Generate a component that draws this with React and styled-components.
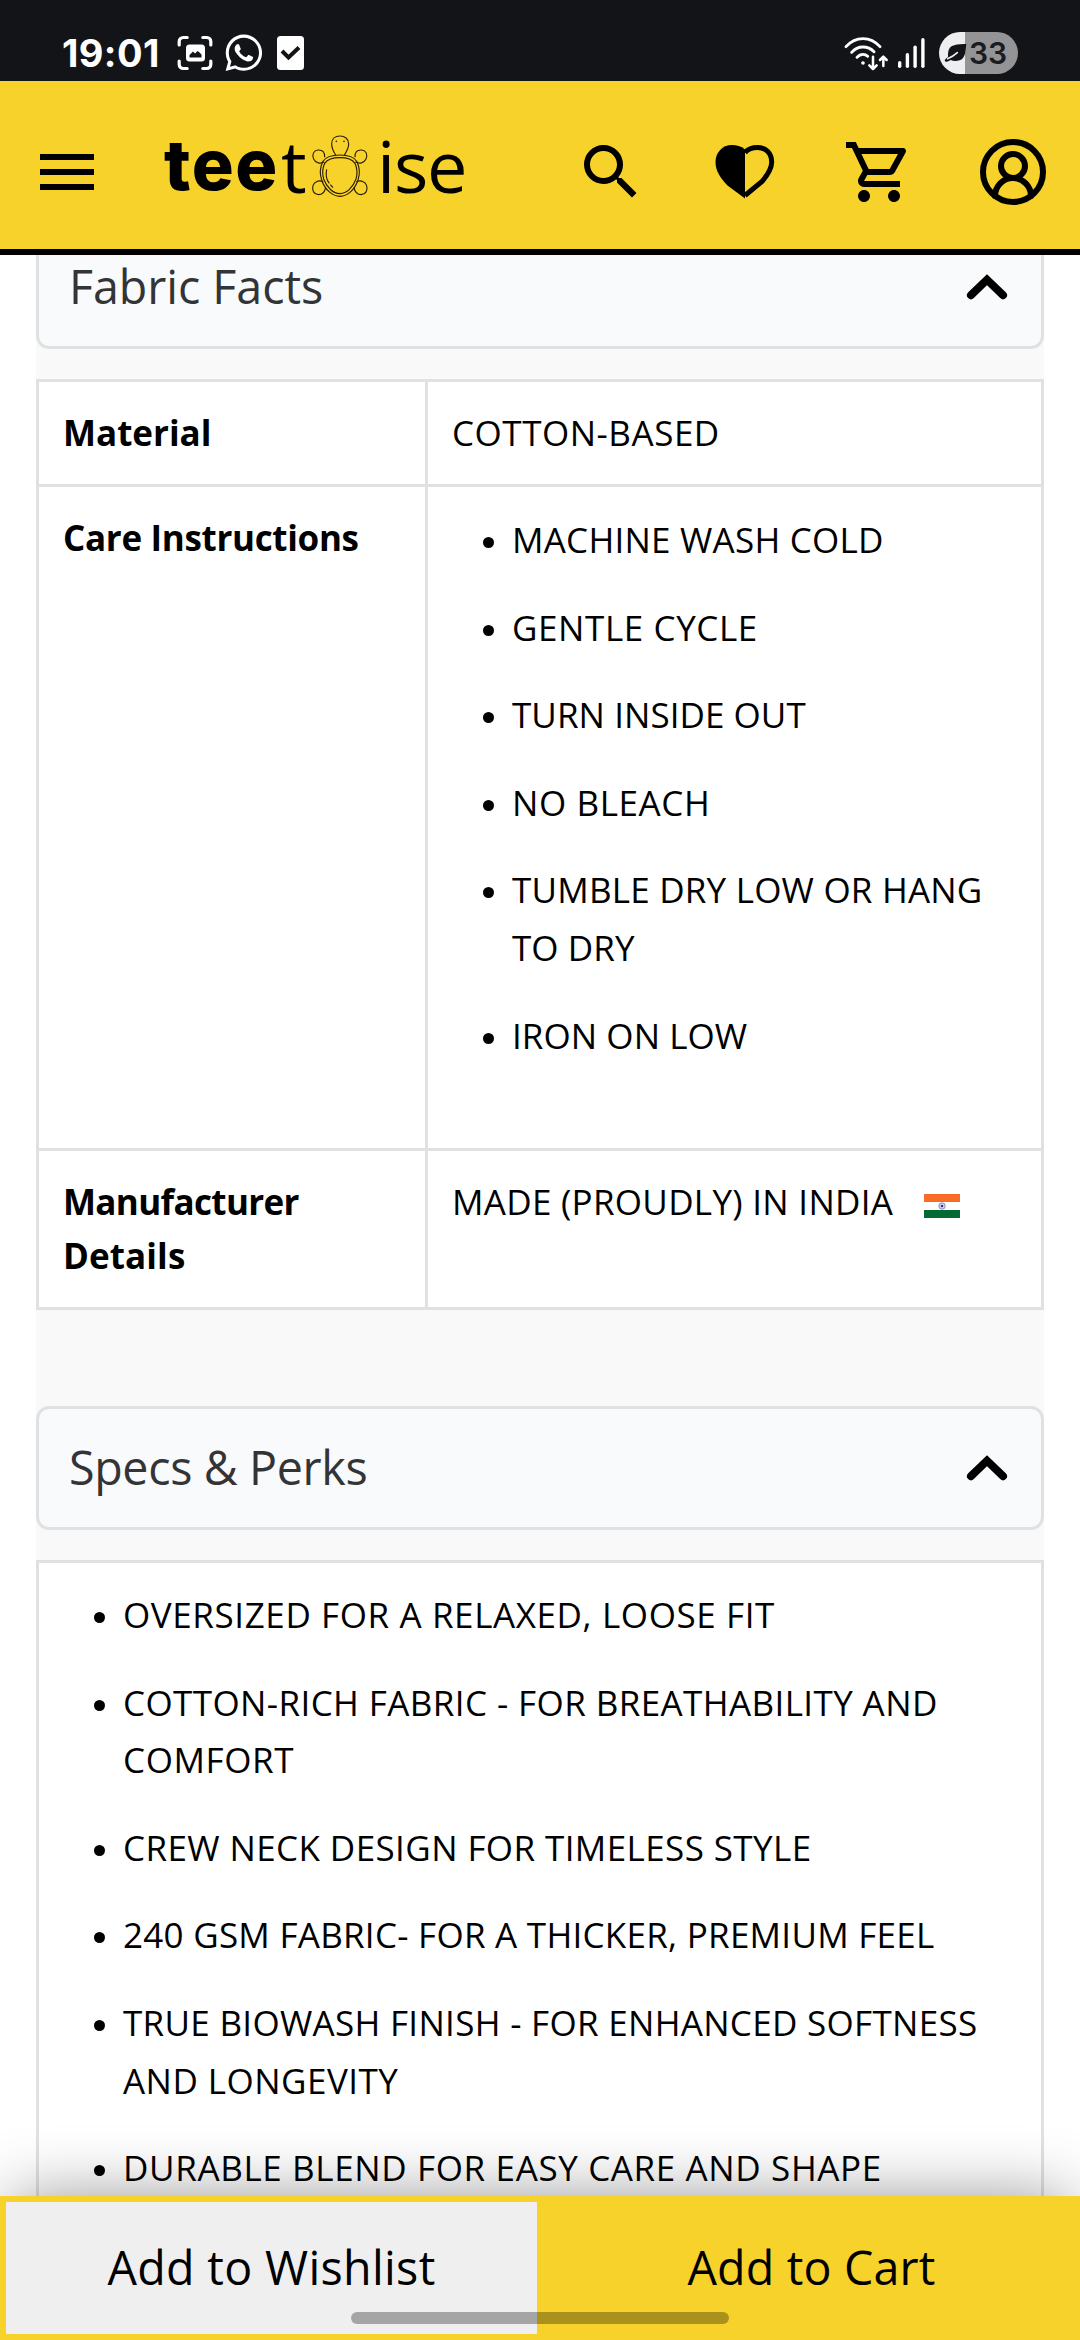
import React from "react";
import styled, { createGlobalStyle } from "styled-components";
import { MdMenu, MdSearch, MdOutlineShoppingCart } from "react-icons/md";
import { FaWhatsapp } from "react-icons/fa";
import { CircleUserRound } from "lucide-react";

const YELLOW = "#f7d22a";
const LINE = "#dfe1e3";

const GlobalStyle = createGlobalStyle`
  * { box-sizing: border-box; }
  body { margin: 0; background: #fff; }
`;

const Page = styled.div`
  display: flex;
  flex-direction: column;
  width: 1080px;
  height: 2340px;
  overflow: hidden;
  background: #fff;
  color: #000;
  font-family: "Open Sans", "Noto Sans", sans-serif;
`;

/* ---------- status bar ---------- */

const StatusBar = styled.div`
  flex: none;
  display: flex;
  justify-content: space-between;
  height: 81px;
  padding: 25px 62px 0 62px;
  background: #131418;
  color: #fff;
`;

const StatusGroup = styled.div`
  display: flex;
  align-items: center;
  height: 56px;
  svg { flex: none; display: block; }
`;

const Clock = styled.span`
  width: 115px;
  font: 700 38px/56px "Inter", sans-serif;
  letter-spacing: 0.4px;
`;

const WhatsappIcon = styled(FaWhatsapp)`
  margin: 0 12px 0 10px;
`;

const Signal = styled.svg`
  margin: 0 14px 0 9px;
`;

const Battery = styled.div`
  display: flex;
  align-items: center;
  gap: 2px;
  width: 79px;
  height: 42px;
  padding-left: 5px;
  border-radius: 21px;
  background: linear-gradient(to right, #eeeef0 26px, #949497 26px);
  color: #1b1c20;
  font: 600 30px/42px "Inter", sans-serif;
`;

/* ---------- header ---------- */

const Header = styled.header`
  flex: none;
  display: flex;
  align-items: center;
  height: 174px;
  padding: 14px 31px 0;
  border-bottom: 6px solid #000;
  background: ${YELLOW};
  svg { flex: none; display: block; }
`;

const Logo = styled.div`
  display: flex;
  align-items: center;
  height: 72px;
  margin-left: 61px;
  line-height: 72px;
  font-size: 72px;
`;

const LogoBold = styled.span`
  width: 117px;
  font-family: "Inter", sans-serif;
  font-weight: 800;
  font-size: 70px;
  letter-spacing: 1.6px;
  padding-bottom: 14px;
`;

const LogoThin = styled.span`
  width: ${(p) => p.$width}px;
  padding-bottom: 14px;
  letter-spacing: -1.2px;
`;

const Turtle = styled.svg`
  margin: -13px 7px 0 0;
`;

const HeaderActions = styled.div`
  display: flex;
  gap: 62px;
  margin-left: auto;
`;

/* ---------- content ---------- */

const Viewport = styled.main`
  flex: 1;
  min-height: 0;
  overflow: hidden;
  padding: 0 36px;
`;

const Details = styled.div`
  display: flex;
  flex-direction: column;
  width: 1008px;
  margin-top: -30px;
  background: #f9f9f9;
`;

const SectionHead = styled.div`
  display: flex;
  align-items: center;
  justify-content: space-between;
  height: 124px;
  margin-bottom: 30px;
  padding: 0 33px 0 30px;
  border: 3px solid ${LINE};
  border-radius: 13px;
  background: #f9fafc;
`;

const SectionTitle = styled.h2`
  margin: 0;
  padding-bottom: 2px;
  color: #333436;
  font-size: 46.6px;
  font-weight: 400;
  line-height: 54px;
  letter-spacing: ${(p) => p.$track}px;
`;

const FactsTable = styled.div`
  margin-bottom: 96px;
  border: 3px solid ${LINE};
  background: #fff;
`;

const FactRow = styled.div`
  box-sizing: content-box;
  display: grid;
  grid-template-columns: 386px 1fr;
  height: ${(p) => p.$height}px;
  border-bottom: 3px solid ${LINE};
  &:last-child { border-bottom: 0; }
`;

const FactName = styled.div`
  padding: 24px;
  font-size: 35px;
  font-weight: 700;
  line-height: 54px;
`;

const FactValue = styled.div`
  display: flex;
  align-items: flex-start;
  gap: 31px;
  padding: 24px;
  border-left: 3px solid ${LINE};
  font-size: 35px;
  line-height: 54px;
`;

const Line = styled.span`
  display: block;
  white-space: nowrap;
  letter-spacing: ${(p) => p.$track}px;
`;

const BulletList = styled.ul`
  display: flex;
  flex-direction: column;
  gap: 30px;
  margin: 0;
  padding: 0 0 0 ${(p) => p.$indent}px;
  list-style: none;
  font-size: 35px;
  line-height: 57.6px;
`;

const BulletItem = styled.li`
  display: flex;
  gap: 18px;
  &::before {
    content: "";
    flex: none;
    width: 11px;
    height: 11px;
    margin-top: 26px;
    border-radius: 50%;
    background: #000;
  }
`;

const PerksBox = styled.div`
  height: 900px;
  padding: 23px 0;
  border: 3px solid ${LINE};
  background: #fff;
`;

/* ---------- bottom bar ---------- */

const BuyBar = styled.footer`
  position: relative;
  flex: none;
  display: grid;
  grid-template-columns: 537px 1fr;
  height: 144px;
  background: ${YELLOW};
  box-shadow: 0 -10px 66px -12px rgba(0, 0, 0, 0.42);
`;

const BuyButton = styled.button`
  margin: 0;
  padding: 0 0 2px ${(p) => (p.$primary ? 6 : 0)}px;
  border: solid ${YELLOW};
  border-width: ${(p) => (p.$primary ? "6px 0" : "6px 0 6px 6px")};
  background: ${(p) => (p.$primary ? YELLOW : "#efefef")};
  color: #000;
  font-family: inherit;
  font-size: 46.6px;
  letter-spacing: ${(p) => p.$track}px;
`;

const HomeHandle = styled.div`
  position: absolute;
  left: 351px;
  bottom: 16px;
  width: 378px;
  height: 12px;
  border-radius: 6px;
  background: rgba(0, 0, 0, 0.31);
`;

const CARE = [
  [["MACHINE WASH COLD", 0.24]],
  [["GENTLE CYCLE", 0.6]],
  [["TURN INSIDE OUT", 0.06]],
  [["NO BLEACH", 0.6]],
  [["TUMBLE DRY LOW OR HANG", 0.21], ["TO DRY", 0.06]],
  [["IRON ON LOW", 0.06]],
];

const PERKS = [
  [["OVERSIZED FOR A RELAXED, LOOSE FIT", 0.6]],
  [["COTTON-RICH FABRIC - FOR BREATHABILITY AND", 0.4], ["COMFORT", 0.6]],
  [["CREW NECK DESIGN FOR TIMELESS STYLE", 0.4]],
  [["240 GSM FABRIC- FOR A THICKER, PREMIUM FEEL", 0.26]],
  [["TRUE BIOWASH FINISH - FOR ENHANCED SOFTNESS", 0.3], ["AND LONGEVITY", 0.47]],
  [["DURABLE BLEND FOR EASY CARE AND SHAPE", 0.63]],
];

function Bullets({ items, indent }) {
  return (
    <BulletList $indent={indent}>
      {items.map((lines) => (
        <BulletItem key={lines[0][0]}>
          <div>
            {lines.map(([text, track]) => (
              <Line key={text} $track={track}>{text}</Line>
            ))}
          </div>
        </BulletItem>
      ))}
    </BulletList>
  );
}

function CaptureIcon() {
  return (
    <svg width="36" height="36" viewBox="0 0 36 36" fill="none">
      <path d="M2.2 10V6.5a4 4 0 0 1 4-4h4M25.8 2.5h4a4 4 0 0 1 4 4V10M33.8 26v3.500a4 4 0 0 1-4 4h-4M10.200 33.500h-4a4 4 0 0 1-4-4V26" stroke="#fff" strokeWidth="3.200" strokeLinecap="round" />
      <rect x="9" y="9.500" width="19" height="17" rx="3.500" fill="#fff" />
      <path d="M12.500 22.500v-2.500l3.500-3.500 2 2 2.500-2.500 1.500 1 2.500 2.500v3z" fill="#131418" />
    </svg>
  );
}

function TaskIcon() {
  return (
    <svg width="27" height="34" viewBox="0 0 27 34" fill="none">
      <rect width="27" height="34" rx="3.500" fill="#fff" />
      <path d="M5 15l6.500 6.500L22 11.500" stroke="#131418" strokeWidth="4" />
    </svg>
  );
}

function WifiIcon() {
  return (
    <svg width="45" height="35" viewBox="40 44 135 105" fill="none" stroke="#fff" strokeWidth="8.500" strokeLinecap="round" strokeLinejoin="round">
      <path d="M46 76Q68 52 97 52t51 24M63 93q14-16 34-16 19 0 33 14M79 108q8-9 18-9 8 0 14 6" />
      <circle cx="97" cy="125" r="5.500" fill="#fff" stroke="none" />
      <path d="M127 106v36M116 132l11 11 11-11M158 134v-27M148 116l10-10 10 10" strokeWidth="7.500" />
    </svg>
  );
}

function SignalIcon() {
  return (
    <Signal width="27" height="30" viewBox="0 0 27 30" fill="#fff">
      <rect x="0" y="23" width="3.400" height="7" rx="1.700" />
      <rect x="7.700" y="15" width="3.400" height="15" rx="1.700" />
      <rect x="15.400" y="7.500" width="3.400" height="22.500" rx="1.700" />
      <rect x="23.200" y="0" width="3.400" height="30" rx="1.700" />
    </Signal>
  );
}

function LeafIcon() {
  return (
    <svg width="23" height="20" viewBox="0 0 69 60">
      <path d="M67 3Q38 2 24 9 12 16 12 33v9Q4 48 2 52q0 5 6 4 7-1 12-5 12 6 27 1 12-5 16-20Q65 20 67 3z" fill="#131418" />
      <path d="M11 47Q28 40 40 29" stroke="#eeeef0" strokeWidth="5" strokeLinecap="round" fill="none" />
    </svg>
  );
}

function TurtleIcon() {
  return (
    <Turtle width="60" height="64" viewBox="480 40 180 192" fill="none" stroke="#2b1d04" strokeWidth="3.400">
      <path d="M557 103C550 92 545 84 545 70C545 54 556 46 570 46S596 54 596 70C596 84 590 92 583 103" />
      <path d="M523 124C511 130 497 128 491 115C485 101 491 89 504 88C518 87 525 95 524 110M616 124C628 130 642 128 648 115C654 101 648 89 635 88C621 87 614 95 615 110" />
      <path d="M520 183C506 177 493 183 489 195C485 210 492 221 505 222C519 222 525 212 527 200M619 183C633 177 646 183 650 195C654 210 647 221 634 222C620 222 614 212 612 200" />
      <path d="M570 103C596 103 613 110 621 123C629 140 630 160 624 178C615 206 593 227 570 227S524 206 515 178C509 160 510 140 518 123C526 110 544 103 570 103Z" />
      <path d="M570 111C593 111 608 118 615 128C622 144 623 159 618 175C609 200 590 219 570 219S530 200 521 175C516 159 517 144 524 128C531 118 547 111 570 111Z" />
      <path d="M530 146C526 164 530 178 538 188M541 192l8 9" />
      <circle cx="559" cy="62" r="2.500" fill="#2b1d04" stroke="none" />
      <circle cx="582" cy="62" r="2.500" fill="#2b1d04" stroke="none" />
    </Turtle>
  );
}

function HalfHeartIcon() {
  return (
    <svg width="72" height="72" viewBox="0 0 72 72">
      <path d="M36 13.500C32 10 27.500 9 23 9 13.500 9 6.500 16.500 6.500 26c0 9 5 16 12 23.500L36 62.500z" fill="#000" />
      <path d="M36 16.500C39.500 12.500 44 11.500 48.500 11.500 57 11.500 62.700 17.500 62.700 26c0 6.500-3.700 12.500-9.700 19.500L36 59.500" fill="none" stroke="#000" strokeWidth="5" />
    </svg>
  );
}

function ChevronUp() {
  return (
    <svg width="42" height="28" viewBox="0 0 42 28" fill="none">
      <path d="M5 22.200L21 6.700l16 15.500" stroke="#000" strokeWidth="8" strokeLinecap="round" />
    </svg>
  );
}

function IndiaFlag() {
  return (
    <svg width="36" height="54" viewBox="0 0 36 54">
      <rect y="19" width="36" height="8" fill="#f86c28" />
      <rect y="35" width="36" height="8" fill="#046a34" />
      <circle cx="18" cy="31" r="3.200" fill="#d9d9f0" stroke="#7c7fc0" strokeWidth="0.900" />
      <circle cx="18" cy="31" r="1.300" fill="#34348c" />
    </svg>
  );
}

export default function App() {
  return (
    <>
      <GlobalStyle />
      <Page>
        <StatusBar>
          <StatusGroup>
            <Clock>19:01</Clock>
            <CaptureIcon />
            <WhatsappIcon size={41.7} />
            <TaskIcon />
          </StatusGroup>
          <StatusGroup>
            <WifiIcon />
            <SignalIcon />
            <Battery>
              <LeafIcon />
              <span>33</span>
            </Battery>
          </StatusGroup>
        </StatusBar>

        <Header>
          <MdMenu size={72} />
          <Logo>
            <LogoBold>tee</LogoBold>
            <LogoThin $width={29}>t</LogoThin>
            <TurtleIcon />
            <LogoThin $width={100}>ise</LogoThin>
          </Logo>
          <HeaderActions>
            <MdSearch size={72} />
            <HalfHeartIcon />
            <MdOutlineShoppingCart size={72} />
            <CircleUserRound size={72} strokeWidth={2} />
          </HeaderActions>
        </Header>

        <Viewport>
          <Details>
            <SectionHead>
              <SectionTitle $track={-0.05}>Fabric Facts</SectionTitle>
              <ChevronUp />
            </SectionHead>
            <FactsTable>
              <FactRow $height={102}>
                <FactName><Line $track={0}>Material</Line></FactName>
                <FactValue><Line $track={0.53}>COTTON-BASED</Line></FactValue>
              </FactRow>
              <FactRow $height={661}>
                <FactName><Line $track={-0.32}>Care Instructions</Line></FactName>
                <FactValue><Bullets items={CARE} indent={31} /></FactValue>
              </FactRow>
              <FactRow $height={156}>
                <FactName>
                  <Line $track={-0.64}>Manufacturer</Line>
                  <Line $track={0.1}>Details</Line>
                </FactName>
                <FactValue>
                  <Line $track={0.29}>MADE (PROUDLY) IN INDIA</Line>
                  <IndiaFlag />
                </FactValue>
              </FactRow>
            </FactsTable>
            <SectionHead>
              <SectionTitle $track={-0.35}>Specs &amp; Perks</SectionTitle>
              <ChevronUp />
            </SectionHead>
            <PerksBox>
              <Bullets items={PERKS} indent={55} />
            </PerksBox>
          </Details>
        </Viewport>

        <BuyBar>
          <BuyButton $track={0.33}>Add to Wishlist</BuyButton>
          <BuyButton $primary $track={0.16}>Add to Cart</BuyButton>
          <HomeHandle />
        </BuyBar>
      </Page>
    </>
  );
}
